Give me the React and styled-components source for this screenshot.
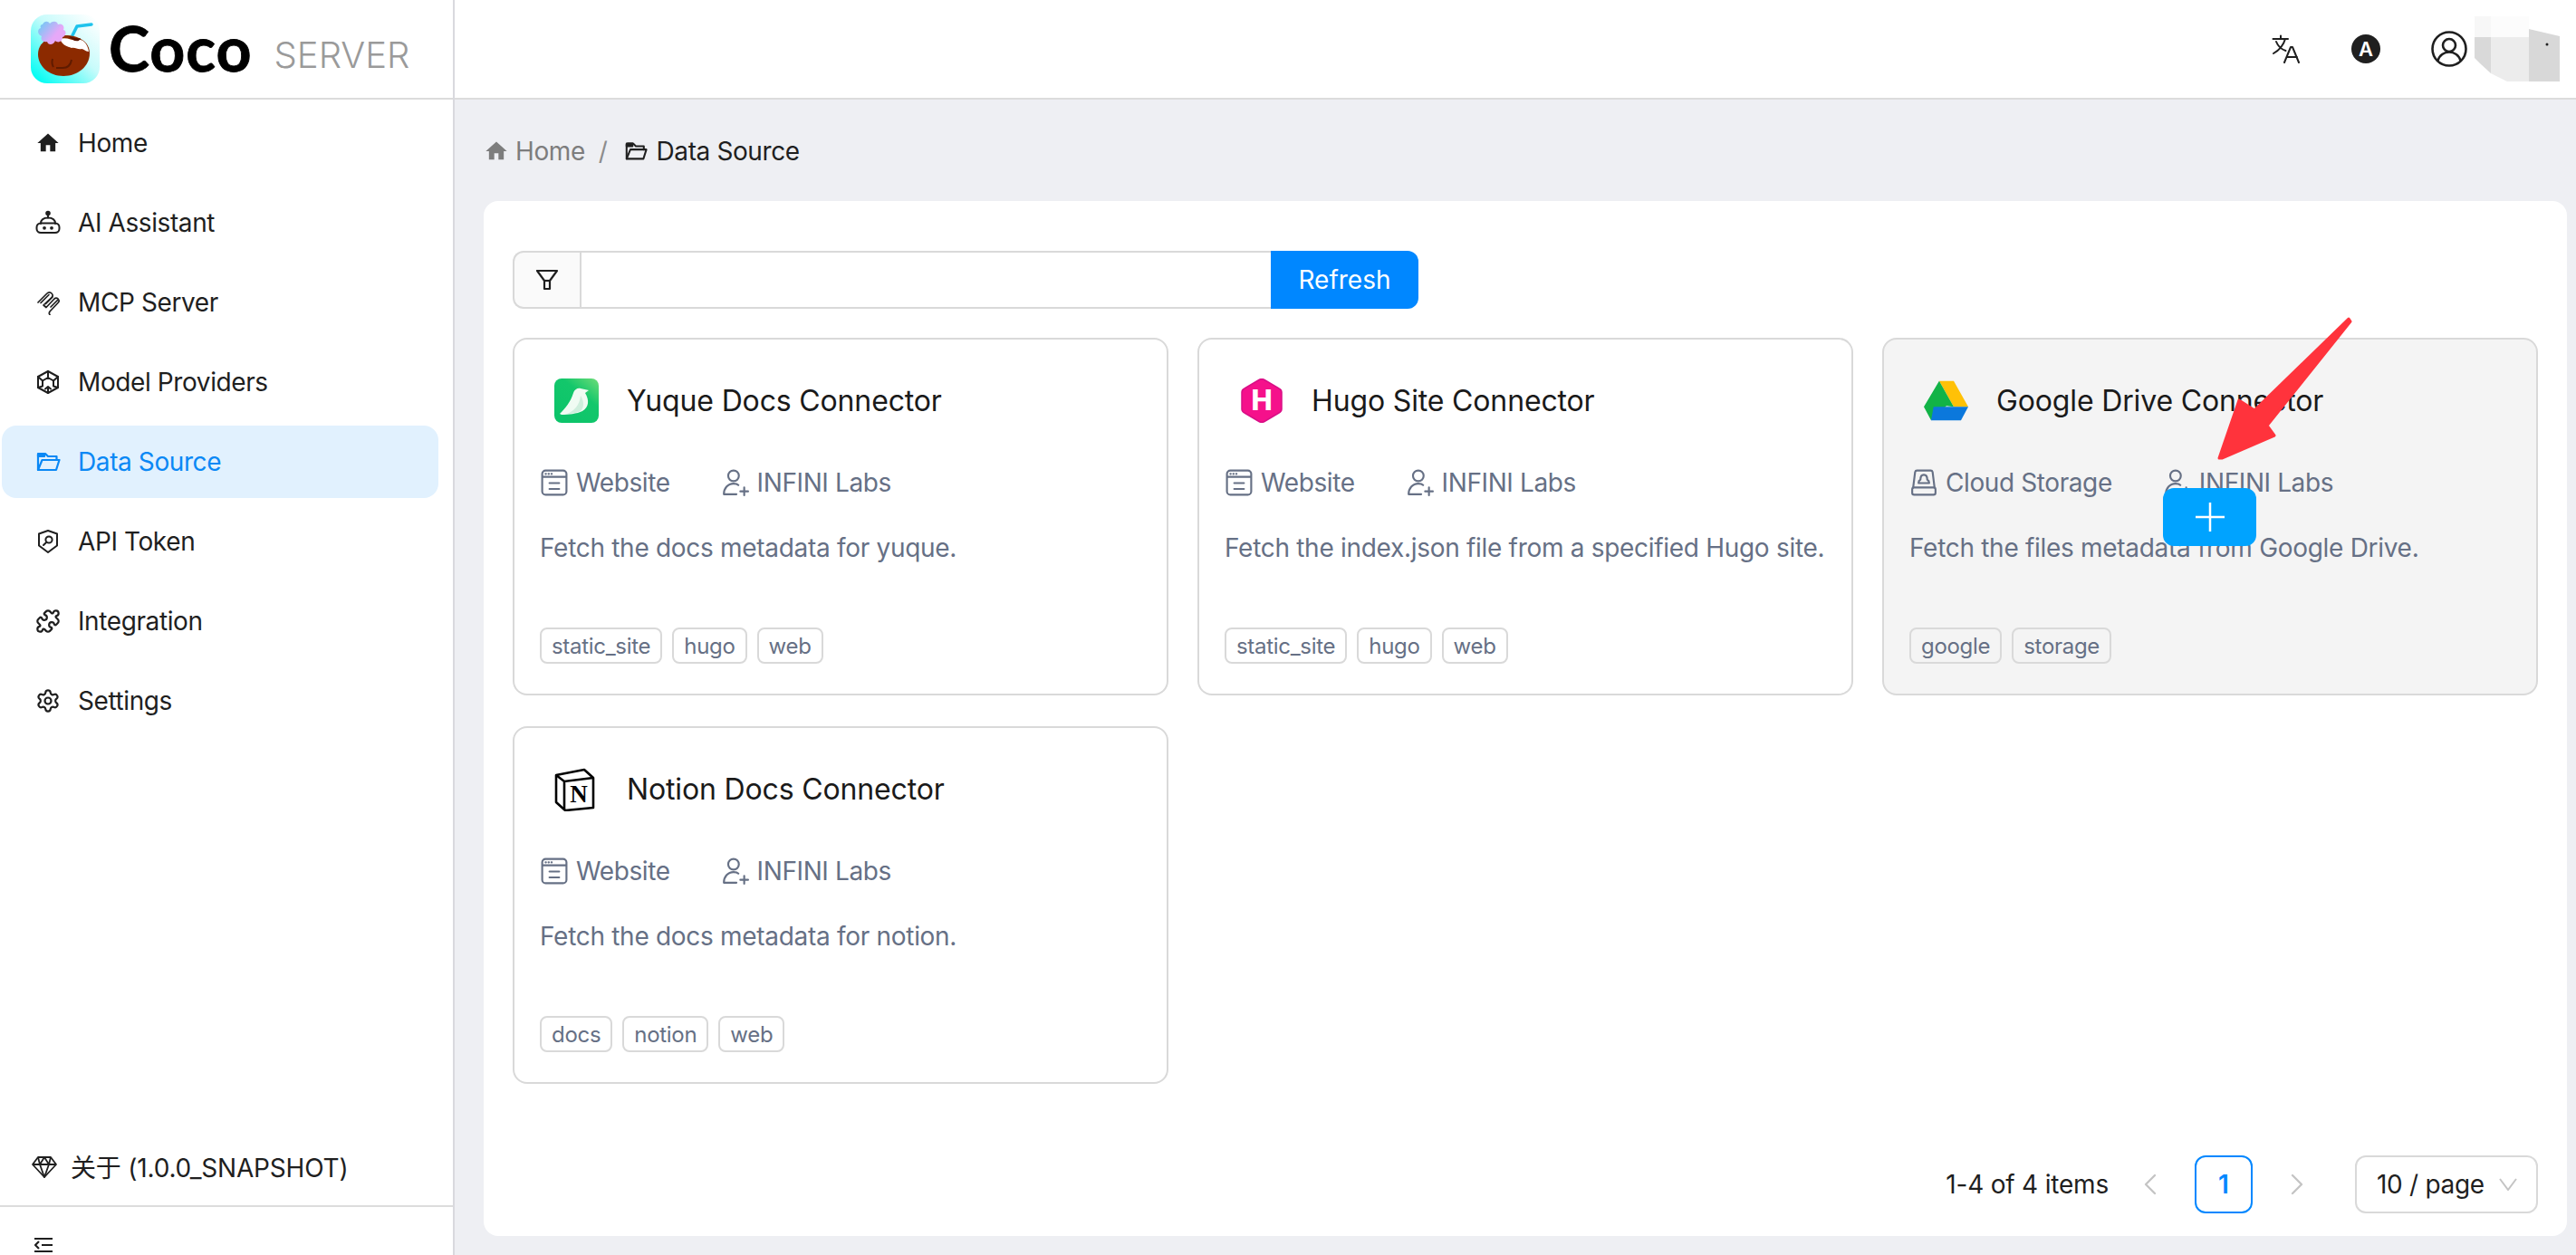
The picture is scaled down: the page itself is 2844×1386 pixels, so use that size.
import React from "react";
import styled, { createGlobalStyle } from "styled-components";
import { Settings, Puzzle, ChevronLeft, ChevronRight } from "lucide-react";

const GlobalStyle = createGlobalStyle`
  html, body, #root {
    margin: 0;
    height: 100%;
  }
  body {
    font-family: Inter, "Noto Sans CJK SC", sans-serif;
    color: #1f1f1f;
    overflow: hidden;
  }
  * { box-sizing: border-box; }
`;

const Shell = styled.div`
  display: flex;
  width: 2844px;
  height: 1386px;
  background: #eeeff3;
  overflow: hidden;
`;

const Sidebar = styled.aside`
  width: 502px;
  flex: none;
  display: flex;
  flex-direction: column;
  background: #fff;
  border-right: 2px solid #d9d9de;
`;

const Brand = styled.div`
  height: 110px;
  flex: none;
  display: flex;
  align-items: center;
  padding-left: 34px;
  border-bottom: 2px solid #dcdcdc;
`;

const BrandName = styled.span`
  font-family: Lato, Inter, sans-serif;
  font-size: 68px;
  font-weight: 700;
  line-height: 1;
  color: #000;
  -webkit-text-stroke: 0.8px #000;
  margin: -2px 0 0 10px;
  letter-spacing: 1px;
`;

const BrandSuffix = styled.span`
  font-size: 40px;
  font-weight: 300;
  color: #9a9a9a;
  margin: 12px 0 0 24px;
`;

const Nav = styled.nav`
  flex: 1;
  display: flex;
  flex-direction: column;
  gap: 8px;
  padding: 8px 16px 0 2px;
`;

const NavItem = styled.div`
  height: 80px;
  display: flex;
  align-items: center;
  gap: 20px;
  padding-left: 38px;
  border-radius: 16px;
  font-size: 28px;
  letter-spacing: -0.4px;
  color: ${(props) => (props.$active ? "#0a88f5" : "#1f1f1f")};
  background: ${(props) => (props.$active ? "#e1f1fe" : "transparent")};
`;

const IconSlot = styled.span`
  width: 26px;
  height: 28px;
  flex: none;
  display: flex;
  align-items: center;
  justify-content: center;
  svg { flex: none; }
`;

const About = styled.div`
  height: 110px;
  flex: none;
  display: flex;
  align-items: center;
  gap: 15px;
  padding: 22px 0 0 35px;
  font-size: 28px;
  letter-spacing: -0.2px;
  border-bottom: 2px solid #dcdcdc;
`;

const Collapse = styled.div`
  height: 53px;
  flex: none;
  padding: 33px 0 0 38px;
  overflow: hidden;
`;

const Main = styled.div`
  flex: 1;
  min-width: 0;
  display: flex;
  flex-direction: column;
`;

const Header = styled.header`
  position: relative;
  height: 110px;
  flex: none;
  display: flex;
  align-items: center;
  justify-content: flex-end;
  gap: 56px;
  padding-right: 120px;
  background: #fff;
  border-bottom: 2px solid #dcdcdc;
`;

const ThemeBadge = styled.span`
  width: 32px;
  height: 32px;
  border-radius: 50%;
  background: #1f1f1f;
  color: #fff;
  font-size: 22px;
  font-weight: 600;
  display: flex;
  align-items: center;
  justify-content: center;
`;

const UserBlur = styled.svg`
  position: absolute;
  right: 18px;
  top: 18px;
`;

const Content = styled.main`
  flex: 1;
  min-height: 0;
  display: flex;
  flex-direction: column;
  padding: 0 10px 21px 32px;
`;

const Breadcrumb = styled.div`
  height: 112px;
  flex: none;
  display: flex;
  align-items: center;
  padding-top: 2px;
  font-size: 28px;
  letter-spacing: -0.4px;
`;

const Crumb = styled.span`
  display: flex;
  align-items: center;
  gap: ${(props) => (props.$current ? "10px" : "7px")};
  color: ${(props) => (props.$current ? "#1f1f1f" : "#7d7d7d")};
`;

const CrumbDivider = styled.span`
  color: #8c8c8c;
  margin: 0 18px 0 15px;
`;

const Panel = styled.section`
  flex: 1;
  min-height: 0;
  display: flex;
  flex-direction: column;
  background: #fff;
  border-radius: 16px;
  padding: 55px 32px 25px;
`;

const SearchBar = styled.div`
  display: flex;
  width: 1000px;
  height: 64px;
  flex: none;
`;

const FilterAddon = styled.div`
  width: 74px;
  display: flex;
  align-items: center;
  justify-content: center;
  background: #fafafa;
  border: 2px solid #d9d9d9;
  border-right: 0;
  border-radius: 12px 0 0 12px;
`;

const SearchInput = styled.input`
  flex: 1;
  min-width: 0;
  border: 2px solid #d9d9d9;
  border-right: 0;
  outline: none;
  background: #fff;
`;

const RefreshButton = styled.button`
  width: 163px;
  border: 0;
  border-radius: 0 12px 12px 0;
  background: #0087ff;
  color: #fff;
  font-family: inherit;
  font-size: 28px;
`;

const Grid = styled.div`
  display: grid;
  grid-template-columns: repeat(3, 724px);
  grid-auto-rows: 395px;
  column-gap: 32px;
  row-gap: 34px;
  margin-top: 32px;
`;

const Card = styled.article`
  position: relative;
  display: flex;
  flex-direction: column;
  padding: 0 28px;
  border: 2px solid #d9d9d9;
  border-radius: 16px;
  background: ${(props) => (props.$hover ? "#f4f4f4" : "#fff")};
`;

const CardHead = styled.div`
  height: 74px;
  margin-top: 30px;
  display: flex;
  align-items: center;
  gap: 31px;
  padding-left: 16px;
`;

const CardLogo = styled.span`
  width: 49px;
  height: 49px;
  flex: none;
  display: flex;
  align-items: center;
  justify-content: center;
`;

const CardTitle = styled.h3`
  margin: 0;
  font-size: 32px;
  font-weight: 400;
  letter-spacing: -0.15px;
  color: #1a1a1a;
`;

const MetaRow = styled.div`
  display: flex;
  align-items: center;
  height: 40px;
  margin-top: 34px;
  padding-left: 1px;
  color: #667085;
  font-size: 28px;
  letter-spacing: -0.4px;
`;

const MetaItem = styled.span`
  display: flex;
  align-items: center;
  gap: 9px;
  margin-right: 57px;
`;

const Description = styled.p`
  margin: 32px 0 0;
  font-size: 28px;
  line-height: 40px;
  letter-spacing: -0.3px;
  white-space: nowrap;
  color: #667085;
`;

const TagRow = styled.div`
  display: flex;
  gap: 11px;
  margin-top: auto;
  margin-bottom: 33px;
`;

const Tag = styled.span`
  height: 40px;
  display: flex;
  align-items: center;
  padding: 0 11px;
  border: 2px solid #d9d9d9;
  border-radius: 8px;
  font-size: 24px;
  letter-spacing: -0.3px;
  color: #667085;
`;

const AddButton = styled.button`
  position: absolute;
  left: 308px;
  top: 164px;
  width: 103px;
  height: 64px;
  border: 0;
  border-radius: 12px;
  background: #00a3ff;
  display: flex;
  align-items: center;
  justify-content: center;
`;

const Arrow = styled.svg`
  position: absolute;
  left: 359px;
  top: -30px;
`;

const Pagination = styled.div`
  display: flex;
  align-items: center;
  justify-content: flex-end;
  margin-top: auto;
  font-size: 28px;
`;

const Total = styled.span`
  margin-right: 33px;
  letter-spacing: -0.2px;
`;

const PageArrow = styled.span`
  width: 26px;
  display: flex;
  justify-content: center;
  color: #c4c4c4;
  svg { flex: none; }
`;

const PageNumber = styled.span`
  width: 64px;
  height: 64px;
  margin: 0 36px;
  display: flex;
  align-items: center;
  justify-content: center;
  border: 2px solid #0087ff;
  border-radius: 12px;
  color: #0087ff;
  font-weight: 600;
`;

const PageSize = styled.div`
  width: 202px;
  height: 64px;
  margin-left: 51px;
  padding: 0 21px 0 22px;
  display: flex;
  align-items: center;
  justify-content: space-between;
  border: 2px solid #d9d9d9;
  border-radius: 12px;
  letter-spacing: -0.3px;
  color: #1f1f1f;
`;

function Line({ size = 28, children, width = 2 }) {
  return (
    <svg width={size} height={size} viewBox="0 0 28 28" fill="none" stroke="currentColor" strokeWidth={width} strokeLinecap="round" strokeLinejoin="round">
      {children}
    </svg>
  );
}

const HomeIcon = ({ size = 28 }) => (
  <svg width={size} height={size} viewBox="0 0 24 24" fill="currentColor">
    <path d="M10 20v-6h4v6h5v-8h3L12 3 2 12h3v8z" />
  </svg>
);

const RobotIcon = () => (
  <Line>
    <circle cx="14" cy="3.500" r="1.800" fill="currentColor" />
    <path d="M14 5v3.500" />
    <path d="M6 15c0-4.500 3.500-6.500 8-6.500s8 2 8 6.500" />
    <rect x="1.500" y="14.500" width="25" height="10.500" rx="4.500" />
    <circle cx="10" cy="19.800" r="1.900" fill="currentColor" stroke="none" />
    <circle cx="18" cy="19.800" r="1.900" fill="currentColor" stroke="none" />
  </Line>
);

const McpIcon = () => (
  <Line width={1.700}>
    <path d="M3 14 13 4a3.200 3.200 0 0 1 5 0c1.500 1.500 1.500 3 0 4.500L9 17l3 2.500 9-9.500a3 3 0 0 1 4 0c1.500 1.500 1.500 3 0 4.500l-9 9.500c-1 1.500-1 2.500 0 3.500" />
    <path d="M6 14.500 15 5.500M11.500 15.500 19 8M17 19l7.500-7.500" />
  </Line>
);

const CubeIcon = () => (
  <Line>
    <path d="M14 2 25 8v12l-11 6L3 20V8z" />
    <path d="M14 2v7l-6 3.500M14 9l6 3.500M3 8l5 4.500v6M25 8l-5 4.500v6M8 18.500 3 20M20 18.500 25 20M14 26v-7M11 21.500l3-2.500 3 2.500" />
  </Line>
);

const FolderIcon = ({ size = 28, width = 2.200 }) => (
  <Line size={size} width={width}>
    <path d="M3 23V6.500A1.500 1.500 0 0 1 4.500 5h6.500l3 3h9.500v4" />
    <path d="M3 23h20l3.500-11H7.500L3 23z" />
    <path d="M3 5h7v3H3z" fill="currentColor" />
  </Line>
);

const ShieldIcon = () => (
  <Line>
    <path d="M14 2 24 5.500v13L14 26 4 18.500v-13z" />
    <circle cx="15" cy="12" r="3.600" />
    <path d="M12.400 14.800 9 18" />
  </Line>
);

const GemIcon = () => (
  <svg width="28" height="28" viewBox="0 0 28 28" fill="none" stroke="currentColor" strokeWidth="1.800" strokeLinejoin="round">
    <path d="M7 4h14l6 8-13 14L1 12z" />
    <path d="M1 12h26M9 12l5 14 5-14M7 4l2 8 5-8 5 8 2-8" />
  </svg>
);

const CollapseIcon = () => (
  <svg width="20" height="20" viewBox="0 0 20 20" fill="none" stroke="currentColor" strokeWidth="2.200">
    <path d="M0 2h20M8 9h12M0 16h20M5 5 1 9l4 4" />
  </svg>
);

const TranslateIcon = () => (
  <svg width="32" height="32" viewBox="0 0 32 32" fill="none" stroke="#1f1f1f" strokeWidth="2" strokeLinecap="round" strokeLinejoin="round">
    <path d="M10 1.500v3M1.500 5h16.500M15 5c-2 7-6 12-13 16M5 8c2 5 6 8.500 10.500 10" />
    <path d="M14 31l7-17h2l7 17M17 25h11" />
  </svg>
);

const UserCircleIcon = () => (
  <svg width="40" height="40" viewBox="0 0 40 40" fill="none" stroke="#1f1f1f" strokeWidth="2.600">
    <circle cx="20" cy="20" r="18.500" />
    <circle cx="20" cy="16" r="7" />
    <path d="M7.500 33c1.500-6 7-9.500 12.500-9.500S31 27 32.500 33" />
  </svg>
);

const FilterIcon = () => (
  <svg width="26" height="26" viewBox="0 0 26 26" fill="none" stroke="#1f1f1f" strokeWidth="2.200" strokeLinejoin="round">
    <path d="M2 3h22l-8 11v9h-6v-9z" />
    <path d="M10 14h6" />
  </svg>
);

const WebsiteIcon = () => (
  <Line size={30}>
    <rect x="1.500" y="1.500" width="25" height="25" rx="3.500" />
    <path d="M2 8h24M9 14.500h10M9 20.500h10" />
    <path d="M5 5h.4M8 5h.4M11 5h.4" />
  </Line>
);

const UserPlusIcon = () => (
  <Line size={30}>
    <circle cx="12" cy="7" r="5.500" />
    <path d="M2 26c0-6 4-11 10-11 2 0 4 .500 5 1.500M2 26h13M23 19v8M19 23h8" />
  </Line>
);

const StorageIcon = () => (
  <Line size={30}>
    <path d="M3 19 5 3a2 2 0 0 1 2-1.500h14A2 2 0 0 1 23 3l2 16" />
    <rect x="2" y="19" width="24" height="7.500" rx="2" />
    <path d="M14 6c3 0 3.500 3 3.500 5 1 .500 2 1.500 2 3.500H8.500c0-2 1-3 2-3.500 0-2 .500-5 3.500-5z" />
  </Line>
);

const SelectChevron = () => (
  <svg width="20" height="14" viewBox="0 0 20 14" fill="none" stroke="#c4c4c4" strokeWidth="2">
    <path d="M1 1l9 12 9-12" />
  </svg>
);

const CocoLogo = () => (
  <svg width="76" height="76" viewBox="0 0 76 76">
    <defs>
      <linearGradient id="cocoBg" x1="0.950" y1="0.050" x2="0.100" y2="0.950">
        <stop offset="0" stopColor="#ffffff" />
        <stop offset="0.450" stopColor="#c8fbfb" />
        <stop offset="1" stopColor="#04fdf3" />
      </linearGradient>
      <linearGradient id="cocoFlower" x1="0" y1="0" x2="1" y2="0.700">
        <stop offset="0" stopColor="#62cdf5" />
        <stop offset="0.700" stopColor="#e6a8f8" />
      </linearGradient>
    </defs>
    <rect width="76" height="76" rx="18" fill="url(#cocoBg)" />
    <path d="M46 23 51 13 67 11" fill="none" stroke="#1fc3ec" strokeWidth="3.500" strokeLinecap="round" strokeLinejoin="round" />
    <path d="M8 44c0-13 12-21 30-21 15 0 27 7 27 20 0 14-13 25-29 25C20 68 8 57 8 44z" fill="#8c2a00" />
    <path d="M32 27c8-3 15 3 21 1 5-1 10 5 11 13-4 0-5-3-8-3-4 1-7-2-11-1-5-2-9-2-13-10z" fill="#fff" />
    <path d="M42 24c5 1 8 3 13 2l-2 3c-4 1-8-1-11-5z" fill="#5a1500" />
    <path d="M13 11c2-4 6-4 8-1 3-3 8-3 9 1 4-2 8 2 6 6 4 1 3 7-1 8 0 5-5 7-8 4-2 5-8 5-9 1-4 1-8-2-6-6-5-2-5-8-1-9-1-2 0-4 2-4z" fill="url(#cocoFlower)" />
    <path d="M25 58c-2-3-2-5-1-9M45 50c-1 6-4 9-10 9h-7" fill="none" stroke="#5f1b00" strokeWidth="2" />
  </svg>
);

const YuqueLogo = () => (
  <svg width="49" height="49" viewBox="0 0 49 49">
    <defs>
      <linearGradient id="yuqueBg" x1="1" y1="0" x2="0.200" y2="1">
        <stop offset="0" stopColor="#6fdc78" />
        <stop offset="0.400" stopColor="#13c76b" />
        <stop offset="1" stopColor="#0cc46a" />
      </linearGradient>
    </defs>
    <rect width="49" height="49" rx="8" fill="url(#yuqueBg)" />
    <path d="M6 39C12 33 18 26 21 16 22 12 26 10 29 11l9 2-4 3c5 8 4 16-3 20-6 3-16 4-23 4z" fill="#f0fbf3" />
    <path d="M14 39c8-3 14-10 15-20 4 6 4 13 0 17-4 2-10 3-15 3z" fill="#cfeedd" />
  </svg>
);

const HugoLogo = () => (
  <svg width="46" height="49" viewBox="0 0 46 49">
    <path d="M20 1.500a6 6 0 0 1 6 0l16 9.500a5 5 0 0 1 3 5v17a5 5 0 0 1-3 5L26 47.500a6 6 0 0 1-6 0L4 38a5 5 0 0 1-3-5V16a5 5 0 0 1 3-5z" fill="#f5118b" stroke="#d90f86" strokeWidth="1.500" />
    <text x="23" y="35" textAnchor="middle" fontFamily="Inter, sans-serif" fontSize="31" fontWeight="800" fill="#fff">H</text>
  </svg>
);

const DriveLogo = () => (
  <svg width="55" height="49" viewBox="0 0 55 49">
    <path d="M19 0h18l18 32H37z" fill="#ffc107" />
    <path d="M19 0 37 32l-9-1L9 49 0 32z" fill="#12b347" />
    <path d="M12 32h43l-9 17H9z" fill="#0b78dc" />
  </svg>
);

const NotionLogo = () => (
  <svg width="49" height="49" viewBox="0 0 49 49">
    <path d="M2 9 33 3l10 9v33L12 48 2 39z" fill="#fff" stroke="#000" strokeWidth="2.600" strokeLinejoin="round" />
    <path d="M2 9 11 16 43 12M11 16v31" fill="none" stroke="#000" strokeWidth="2.600" />
    <text x="27" y="39" textAnchor="middle" fontFamily="'Liberation Serif', serif" fontSize="27" fontWeight="700" fill="#000">N</text>
  </svg>
);

const navItems = [
  { label: "Home", icon: <HomeIcon /> },
  { label: "AI Assistant", icon: <RobotIcon /> },
  { label: "MCP Server", icon: <McpIcon /> },
  { label: "Model Providers", icon: <CubeIcon /> },
  { label: "Data Source", icon: <FolderIcon />, active: true },
  { label: "API Token", icon: <ShieldIcon /> },
  { label: "Integration", icon: <Puzzle size={28} strokeWidth={1.900} /> },
  { label: "Settings", icon: <Settings size={28} strokeWidth={1.900} /> },
];

const connectors = [
  { title: "Yuque Docs Connector", logo: <YuqueLogo />, type: "Website", typeIcon: <WebsiteIcon />, text: "Fetch the docs metadata for yuque.", tags: ["static_site", "hugo", "web"] },
  { title: "Hugo Site Connector", logo: <HugoLogo />, type: "Website", typeIcon: <WebsiteIcon />, text: "Fetch the index.json file from a specified Hugo site.", tags: ["static_site", "hugo", "web"] },
  { title: "Google Drive Connector", logo: <DriveLogo />, type: "Cloud Storage", typeIcon: <StorageIcon />, text: "Fetch the files metadata from Google Drive.", tags: ["google", "storage"], hover: true },
  { title: "Notion Docs Connector", logo: <NotionLogo />, type: "Website", typeIcon: <WebsiteIcon />, text: "Fetch the docs metadata for notion.", tags: ["docs", "notion", "web"] },
];

function ConnectorCard({ item }) {
  return (
    <Card $hover={item.hover}>
      <CardHead>
        <CardLogo>{item.logo}</CardLogo>
        <CardTitle>{item.title}</CardTitle>
      </CardHead>
      <MetaRow>
        <MetaItem>
          {item.typeIcon}
          {item.type}
        </MetaItem>
        <MetaItem>
          <UserPlusIcon />
          INFINI Labs
        </MetaItem>
      </MetaRow>
      <Description>{item.text}</Description>
      <TagRow>
        {item.tags.map((tag) => (
          <Tag key={tag}>{tag}</Tag>
        ))}
      </TagRow>
      {item.hover && (
        <>
          <AddButton>
            <svg width="34" height="34" viewBox="0 0 34 34" stroke="#fff" strokeWidth="2.500">
              <path d="M17 1v32M1 17h32" />
            </svg>
          </AddButton>
          <Arrow width="160" height="170" viewBox="0 0 160 170">
            <path d="M154 7 156 10 64 125 72 136 14 161 11 161 33 97 50 108z" fill="#ff333c" stroke="#ff333c" strokeWidth="3" strokeLinejoin="round" />
          </Arrow>
        </>
      )}
    </Card>
  );
}

export default function App() {
  return (
    <>
      <GlobalStyle />
      <Shell>
        <Sidebar>
          <Brand>
            <CocoLogo />
            <BrandName>Coco</BrandName>
            <BrandSuffix>SERVER</BrandSuffix>
          </Brand>
          <Nav>
            {navItems.map((item) => (
              <NavItem key={item.label} $active={item.active}>
                <IconSlot>{item.icon}</IconSlot>
                {item.label}
              </NavItem>
            ))}
          </Nav>
          <About>
            <GemIcon />
            关于 (1.0.0_SNAPSHOT)
          </About>
          <Collapse>
            <CollapseIcon />
          </Collapse>
        </Sidebar>
        <Main>
          <Header>
            <TranslateIcon />
            <ThemeBadge>A</ThemeBadge>
            <UserCircleIcon />
            <UserBlur width="94" height="72" viewBox="0 0 94 72">
              <path d="M0 0h18v23H0z" fill="#f7f7f7" />
              <path d="M18 0h42v23H18z" fill="#fcfcfc" />
              <path d="M0 23h18v40L6 52 0 46z" fill="#d9d9d9" />
              <path d="M18 23h42v49H36L18 63z" fill="#ececec" />
              <path d="M60 23l34 8v50H60z" fill="#d8d8d8" transform="translate(0 -9)" />
              <circle cx="80" cy="31" r="1.500" fill="#222" />
            </UserBlur>
          </Header>
          <Content>
            <Breadcrumb>
              <Crumb>
                <HomeIcon size={28} />
                Home
              </Crumb>
              <CrumbDivider>/</CrumbDivider>
              <Crumb $current>
                <FolderIcon size={26} />
                Data Source
              </Crumb>
            </Breadcrumb>
            <Panel>
              <SearchBar>
                <FilterAddon>
                  <FilterIcon />
                </FilterAddon>
                <SearchInput />
                <RefreshButton>Refresh</RefreshButton>
              </SearchBar>
              <Grid>
                {connectors.map((item) => (
                  <ConnectorCard key={item.title} item={item} />
                ))}
              </Grid>
              <Pagination>
                <Total>1-4 of 4 items</Total>
                <PageArrow>
                  <ChevronLeft size={40} strokeWidth={1.400} />
                </PageArrow>
                <PageNumber>1</PageNumber>
                <PageArrow>
                  <ChevronRight size={40} strokeWidth={1.400} />
                </PageArrow>
                <PageSize>
                  10 / page
                  <SelectChevron />
                </PageSize>
              </Pagination>
            </Panel>
          </Content>
        </Main>
      </Shell>
    </>
  );
}
